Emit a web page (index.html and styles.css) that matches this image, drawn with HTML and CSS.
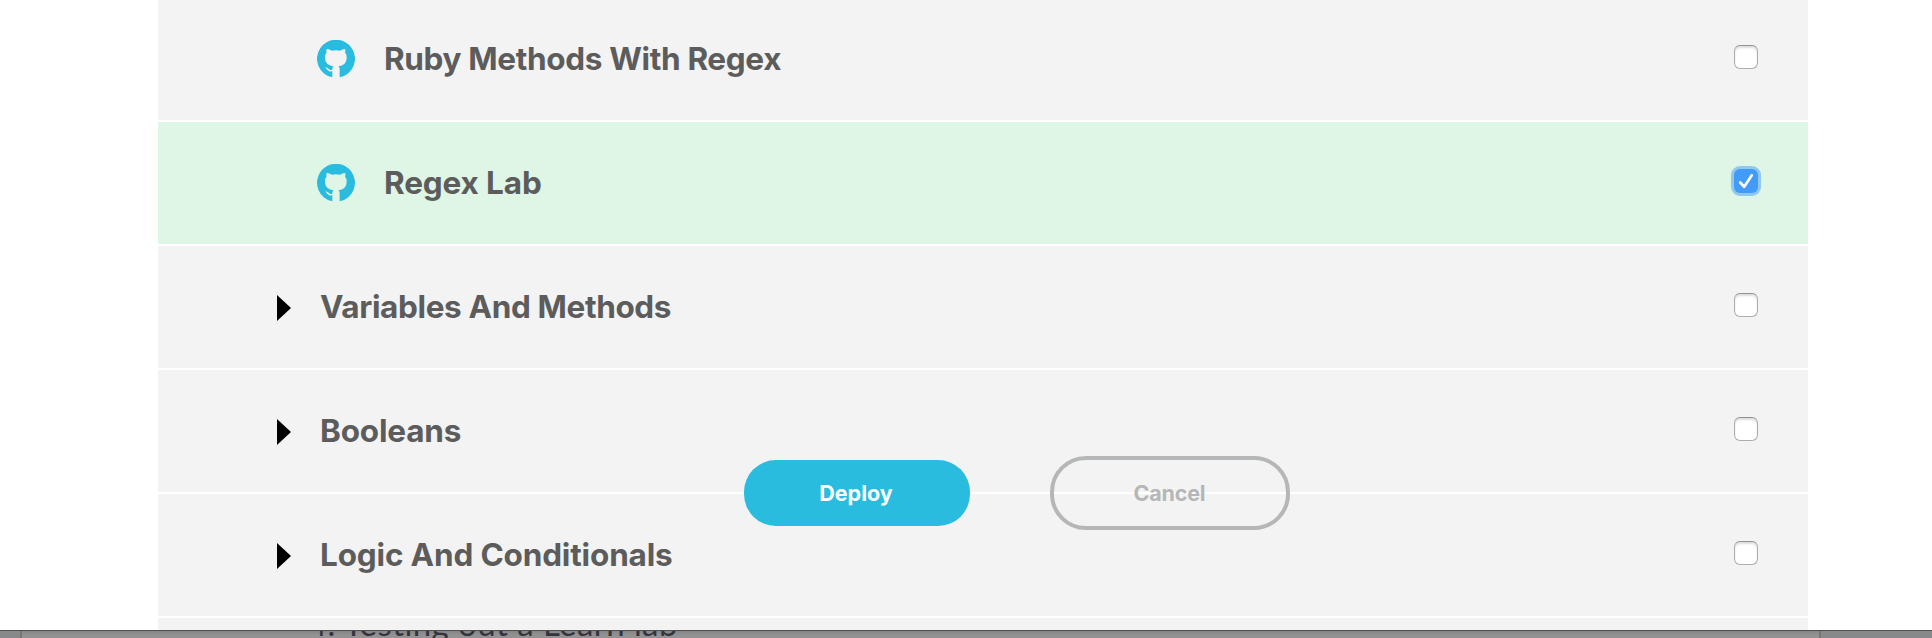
FILE: index.html
```html
<!DOCTYPE html>
<html lang="en">
<head>
<meta charset="utf-8">
<title>Deploy lessons</title>
<link rel="stylesheet" href="styles.css">
</head>
<body>
<svg class="defs" aria-hidden="true">
  <symbol id="github" viewBox="0 0 114 114"><path d="M46 112A57 57 0 1 1 68 112V90C68 84 66 81 64 79C82 77 89 68 89 52C89 46 88 42 84 38C86 33 85 28 84 27C79 27 74 30 70 32C61 30 52 30 44 32C40 29 34 27 29 27C28 30 27 34 29 38C25 42 24 46 24 52C24 68 32 77 50 79C47 82 46 85 46 89C38 91 36 88 33 85C31 83 28 82 25 83C31 86 31 96 46 94Z"/></symbol>
</svg>
<main class="modal">
  <ul class="list">
    <li class="row lab"><svg class="github"><use href="#github"/></svg><span class="title t1">Ruby Methods With Regex</span><input class="check" type="checkbox"></li>
    <li class="row lab selected"><svg class="github"><use href="#github"/></svg><span class="title t2">Regex Lab</span><input class="check" type="checkbox" checked></li>
    <li class="row"><i class="arrow"></i><span class="title t3">Variables And Methods</span><input class="check" type="checkbox"></li>
    <li class="row"><i class="arrow"></i><span class="title t4">Booleans</span><input class="check" type="checkbox"></li>
    <li class="row"><i class="arrow"></i><span class="title t5">Logic And Conditionals</span><input class="check" type="checkbox"></li>
    <li class="row"></li>
  </ul>
  <div class="actions">
    <button class="btn deploy">Deploy</button>
    <button class="btn cancel">Cancel</button>
  </div>
</main>
<footer class="backdrop"><div class="page"><span class="lesson">4. Testing out a Learn lab</span></div></footer>
</body>
</html>
```
FILE: styles.css
```css
* { box-sizing: border-box; }
body { margin: 0; height: 638px; overflow: hidden; background: #fff; font-family: Inter, "Liberation Sans", sans-serif; }
.defs { position: absolute; width: 0; height: 0; }
.modal { position: relative; height: 630px; overflow: hidden; }
.list { list-style: none; margin: -2px 124px 0 158px; padding: 0; }
.row { height: 124px; display: flex; align-items: center; padding: 0 50px 0 119px; background: #f3f3f3; border-bottom: 2px solid #fff; }
.selected { background: #dff5e5; }
.lab { padding-left: 159px; }
.github { width: 38px; height: 38px; fill: #29bcde; margin-right: 29px; flex: none; }
.arrow { width: 14px; height: 26px; background: #000; clip-path: polygon(0 0, 100% 50%, 0 100%); margin: 2px 29px 0 0; }
.title { font-size: 31.5px; line-height: 40px; font-weight: 700; color: #5c5c5c; white-space: nowrap; }
.t1 { letter-spacing: -.34px; }
.t2 { letter-spacing: -.12px; }
.t3 { letter-spacing: -.36px; }
.t4 { letter-spacing: -.18px; }
.t5 { letter-spacing: -.16px; }
.check { appearance: none; width: 24px; height: 24px; margin: 0 0 4px auto; border: 1px solid #adadad; border-top-color: #929292; border-radius: 6px; background: #fff; box-shadow: inset 0 2px 2px #ddd; }
.check:checked { border: 0; background: #429bf9 url("data:image/svg+xml,%3Csvg xmlns='http://www.w3.org/2000/svg' viewBox='0 0 24 24'%3E%3Cpath d='M6.2 13.5 10.2 17.7 17.8 6.3' fill='none' stroke='white' stroke-width='2.7' stroke-linecap='round' stroke-linejoin='round'/%3E%3C/svg%3E"); box-shadow: 0 0 0 3px #91c8ef; }
.actions { position: absolute; left: 744px; top: 456px; display: flex; align-items: center; gap: 80px; }
.btn { font: 700 21.5px/26px Inter, sans-serif; padding: 0; }
.deploy { width: 226px; height: 66px; border: 0; border-radius: 32px; background: #29bcde; color: #fff; padding-right: 2px; }
.cancel { width: 240px; height: 74px; border: 4px solid #b5b6b7; border-radius: 36px; background: transparent; color: #b5b6b7; letter-spacing: -.2px; padding-right: 1px; }
.backdrop { height: 8px; padding: 0 111px 0 20px; background: #88898b; border-top: 1px solid #515152; }
.page { height: 7px; padding-left: 286px; background: linear-gradient(#858585, #929292 4px); border: solid #757678; border-width: 0 2px; display: flex; align-items: flex-end; overflow: hidden; }
.lesson { font: 33px/40px Lato, sans-serif; letter-spacing: .43px; color: #34343d; white-space: nowrap; margin-bottom: -5px; }
```
